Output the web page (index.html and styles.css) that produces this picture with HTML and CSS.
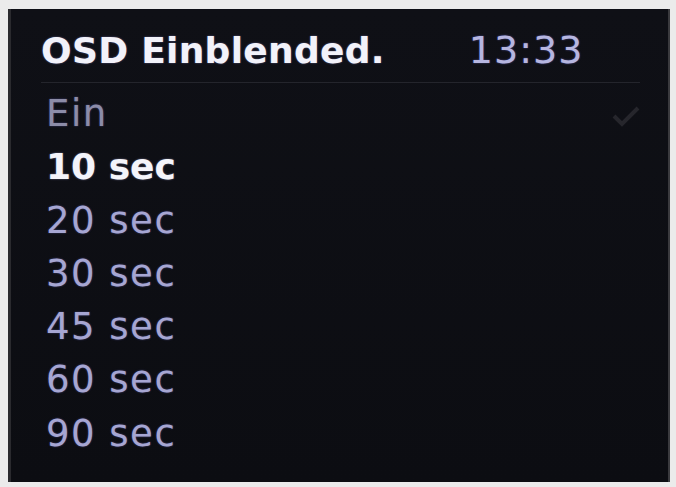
FILE: index.html
```html
<!DOCTYPE html>
<html>
<head>
<meta charset="utf-8">
<link rel="stylesheet" href="styles.css">
</head>
<body>
<div class="panel">
  <div class="header">
    <span class="title">OSD Einblended.</span>
    <span class="time">13:33</span>
  </div>
  <ul class="list">
    <li class="item dim"><span>Ein</span>
      <svg class="check" width="28" height="22" viewBox="0 0 28 22"><path d="M2 11 L10 19 L26 3" fill="none" stroke="#26262c" stroke-width="4"/></svg>
    </li>
    <li class="item active">10 sec</li>
    <li class="item">20 sec</li>
    <li class="item">30 sec</li>
    <li class="item">45 sec</li>
    <li class="item">60 sec</li>
    <li class="item">90 sec</li>
  </ul>
</div>
</body>
</html>
```
FILE: styles.css
```css
html, body {
  margin: 0;
  padding: 0;
  background: #ebebeb;
}
body {
  padding: 9px 6px 5px 8px;
  font-family: "DejaVu Sans", "Liberation Sans", sans-serif;
}
.panel {
  height: 473px;
  box-sizing: border-box;
  background: linear-gradient(180deg, #0f1016 0%, #0c0d12 100%);
  border-left: 3px solid #2a2a2e;
  border-right: 2px solid #3a3a3e;
  padding: 19px 28px 0 30px;
}
.header {
  display: flex;
  align-items: baseline;
  height: 44px;
  line-height: 44px;
  padding-bottom: 10px;
  border-bottom: 1px solid #24252c;
}
.title {
  font-size: 36px;
  font-weight: bold;
  color: #f2f2fa;
  letter-spacing: 0.3px;
  text-shadow: 0 0 2px rgba(170, 170, 255, 0.5);
}
.time {
  margin-left: 84px;
  font-size: 38px;
  color: #b6b6e0;
  letter-spacing: 1px;
  text-shadow: 0 0 2px rgba(120, 120, 230, 0.6);
}
.list {
  list-style: none;
  margin: 4px 0 0;
  padding: 0 0 0 5px;
}
.item {
  display: flex;
  justify-content: space-between;
  align-items: center;
  height: 53.3px;
  line-height: 53.3px;
  font-size: 37px;
  color: #a6a6d2;
  letter-spacing: 1.5px;
  text-shadow: 0 0 2px rgba(120, 120, 220, 0.5);
}
.item.dim {
  color: #8c8ca8;
}
.item.active {
  font-weight: bold;
  font-size: 36px;
  letter-spacing: 0;
  color: #f4f4fa;
  text-shadow: 0 0 2px rgba(200, 200, 255, 0.5);
}
.check {
  margin-right: 0;
  margin-top: 4px;
}
```
